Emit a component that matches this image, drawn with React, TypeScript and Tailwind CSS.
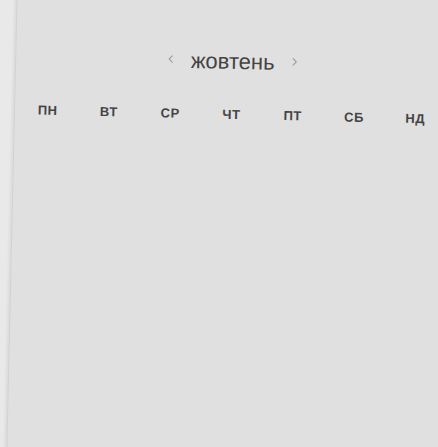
import { ChevronLeft, ChevronRight } from "lucide-react";

const weekdays = ["ПН", "ВТ", "СР", "ЧТ", "ПТ", "СБ", "НД"];

export default function App() {
  return (
    <div className="w-[438px] h-[447px] overflow-hidden bg-[#e9e9e9] font-['Liberation_Sans',Arial,sans-serif]">
      {/* calendar sheet, slightly tilted */}
      <div className="ml-[17px] -mt-[20px] w-[440px] h-[520px] bg-[#e0e0e0] border-l border-[#d2d2d2] shadow-[-2px_0_3px_rgba(0,0,0,0.06)] rotate-[1.3deg] origin-top-left">
        <div className="w-[433px] pt-[63px] flex items-center justify-center gap-[14px]">
          <ChevronLeft className="w-[13px] h-[13px] text-[#9a9a9a] -mt-[3px]" strokeWidth={2} />
          <span className="text-[22px] leading-[28px] text-[#444]">жовтень</span>
          <ChevronRight className="w-[13px] h-[13px] text-[#9a9a9a] -mt-[3px]" strokeWidth={2} />
        </div>
        <div className="w-[433px] mt-[31px] px-[2px] grid grid-cols-7">
          {weekdays.map((d) => (
            <div key={d} className="text-center text-[13px] leading-[16px] font-bold tracking-[0.6px] text-[#444]">
              {d}
            </div>
          ))}
        </div>
      </div>
    </div>
  );
}
